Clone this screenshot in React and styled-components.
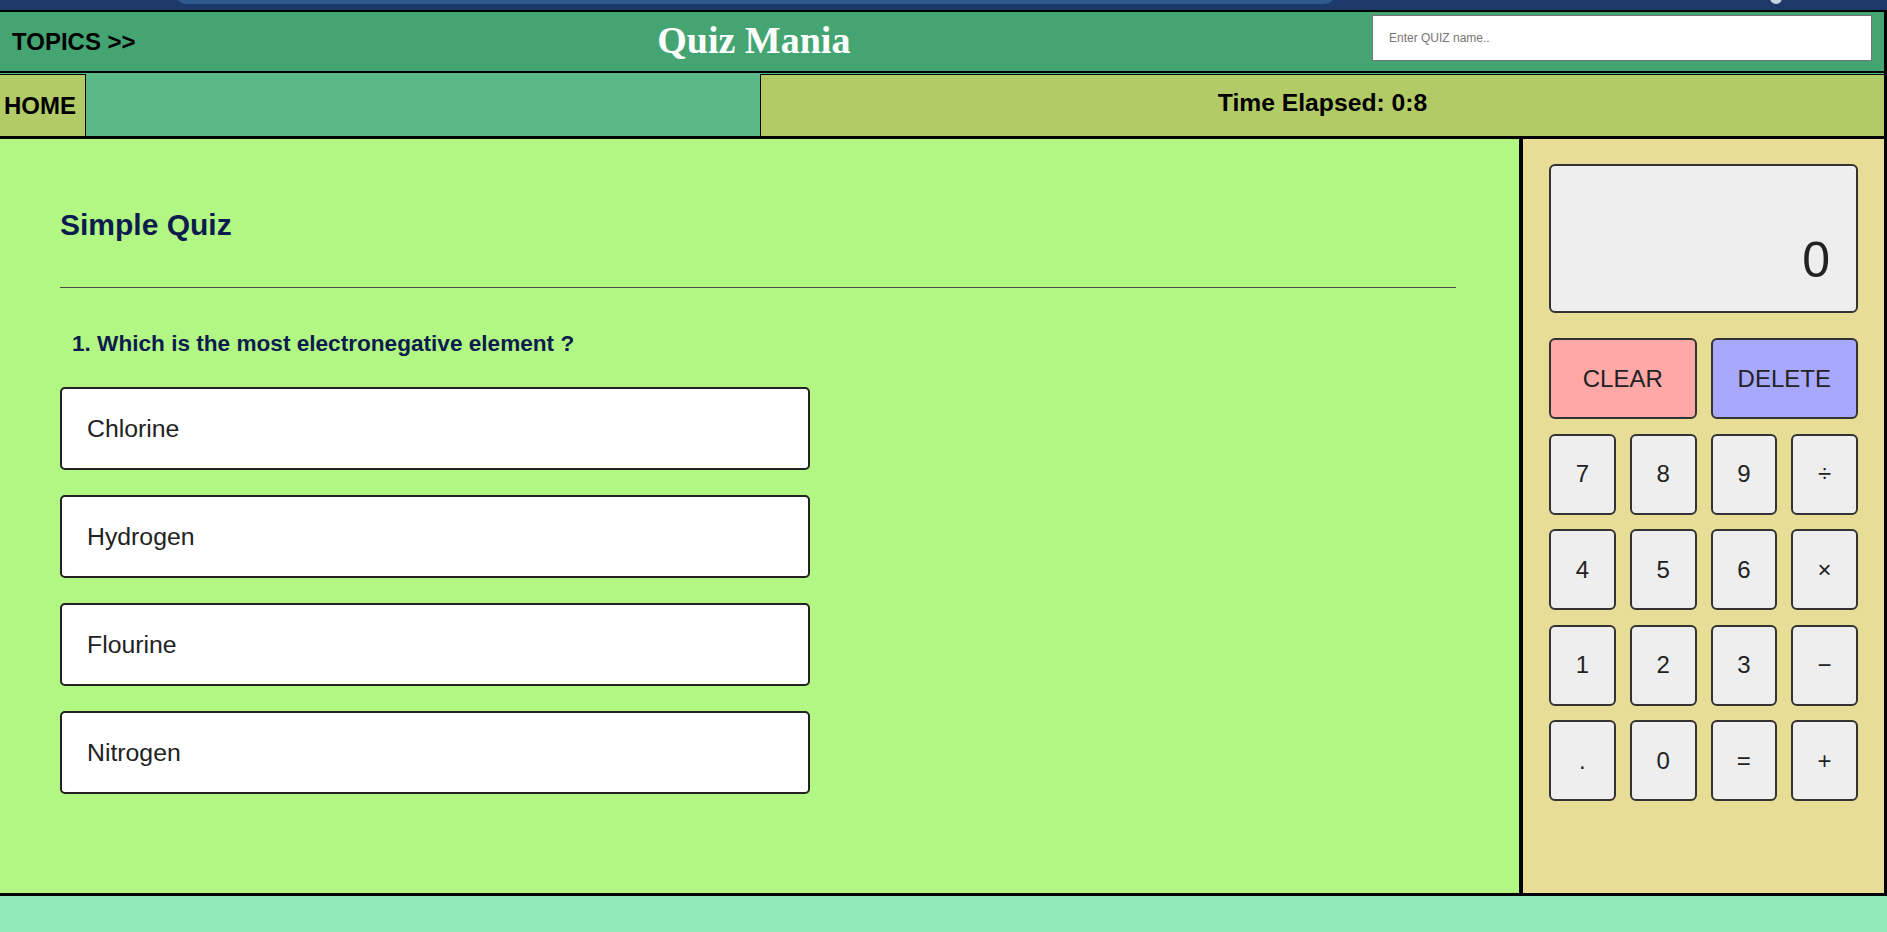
import React from "react";
import styled, { createGlobalStyle } from "styled-components";

const GlobalStyle = createGlobalStyle`
  html, body {
    margin: 0;
    padding: 0;
    background: #8fe9b9;
    font-family: "Liberation Sans", Arial, sans-serif;
  }
  * {
    box-sizing: border-box;
  }
`;

const BrowserStrip = styled.div`
  height: 10px;
  background-color: #1c3969;
  position: relative;
  overflow: hidden;
`;

const UrlBar = styled.div`
  position: absolute;
  left: 175px;
  top: -20px;
  width: 1161px;
  height: 24px;
  border-radius: 12px;
  background-color: #2f5a8f;
`;

const BrowserIcon = styled.div`
  position: absolute;
  left: 1770px;
  top: -8px;
  width: 12px;
  height: 12px;
  border-radius: 50%;
  background-color: #c9d3e0;
`;

const Frame = styled.div`
  border-top: 2px solid black;
  border-right: 3px solid black;
`;

const Header = styled.header`
  height: 59px;
  background-color: #45a572;
  display: flex;
  justify-content: space-between;
  align-items: center;
  padding: 0 12px;
`;

const Topics = styled.div`
  font-size: 24px;
  font-weight: bold;
  color: black;
  cursor: pointer;
`;

const Title = styled.h1`
  margin: 0 0 4px;
  font-family: "Liberation Serif", "Times New Roman", serif;
  font-size: 38px;
  font-weight: bold;
  color: white;
`;

const Search = styled.input`
  width: 500px;
  height: 46px;
  margin-bottom: 7px;
  border: 1px solid #767676;
  background: white;
  padding: 0 16px;
  font-family: "Liberation Sans", Arial, sans-serif;
  font-size: 12px;
  outline: none;

  &::placeholder {
    color: #757575;
  }
`;

const NavRow = styled.nav`
  height: 65px;
  border-top: 2px solid black;
  display: flex;
  background-color: #5bb987;
`;

const HomeButton = styled.div`
  width: 86px;
  padding-left: 4px;
  margin-top: 1px;
  border-top: 1px solid black;
  border-right: 1px solid black;
  background-color: #b2cb66;
  display: flex;
  align-items: center;
  font-size: 24px;
  font-weight: bold;
  color: black;
`;

const Filler = styled.div`
  flex: 1;
`;

const TimeBox = styled.div`
  width: 1124px;
  margin-top: 1px;
  border-top: 1px solid black;
  border-left: 1px solid black;
  background-color: #b2cb66;
  display: flex;
  justify-content: center;
  align-items: center;
  padding-bottom: 5px;
  font-size: 24.7px;
  font-weight: bold;
  color: black;
`;

const Main = styled.main`
  height: 760px;
  display: flex;
  border-top: 3px solid black;
  border-bottom: 3px solid black;
`;

const QuizPanel = styled.section`
  flex: 1;
  background-color: #b2f783;
  padding: 0 63px 0 60px;
`;

const QuizTitle = styled.h2`
  margin: 69px 0 0;
  line-height: 34px;
  font-size: 30px;
  font-weight: bold;
  color: #0c1c4e;
`;

const Rule = styled.hr`
  margin: 45px 0 0;
  border: 0;
  border-top: 1px solid #4a4a4a;
`;

const Question = styled.p`
  margin: 43px 0 0;
  padding-left: 12px;
  line-height: 26px;
  font-size: 22.6px;
  font-weight: bold;
  color: #0c1c4e;
`;

const Options = styled.div`
  margin-top: 30px;
  display: flex;
  flex-direction: column;
  gap: 25px;
`;

const Option = styled.button`
  width: 750px;
  height: 83px;
  background: white;
  border: 2px solid #222;
  border-radius: 5px;
  text-align: left;
  padding: 0 25px;
  font-family: "Liberation Sans", Arial, sans-serif;
  font-size: 24.8px;
  color: #222;
  cursor: pointer;
`;

const CalcPanel = styled.aside`
  width: 365px;
  border-left: 4px solid black;
  background-color: #e8dd97;
  padding: 25px 26px;
`;

const Display = styled.div`
  height: 149px;
  background-color: #eeeeee;
  border: 2px solid #333;
  border-radius: 6px;
  display: flex;
  justify-content: flex-end;
  align-items: flex-end;
  padding: 0 26px 22px;
  font-size: 50px;
  color: #222;
`;

const Keys = styled.div`
  margin-top: 25px;
  display: grid;
  grid-template-columns: repeat(4, 1fr);
  grid-auto-rows: 81px;
  column-gap: 14px;
  row-gap: 14.5px;
`;

const Key = styled.button`
  grid-column: span ${(props) => (props.wide ? 2 : 1)};
  background-color: ${(props) => props.bg || "#eeeeee"};
  border: 2px solid #333;
  border-radius: 6px;
  font-family: "Liberation Sans", Arial, sans-serif;
  font-size: 24px;
  color: #222;
  cursor: pointer;
  padding: 0;
`;

const Footer = styled.footer`
  height: 36px;
  background-color: #8fe9b9;
`;

const answers = ["Chlorine", "Hydrogen", "Flourine", "Nitrogen"];
const keys = ["7", "8", "9", "÷", "4", "5", "6", "×", "1", "2", "3", "−", ".", "0", "=", "+"];

const App = () => {
  return (
    <>
      <GlobalStyle />
      <BrowserStrip>
        <UrlBar />
        <BrowserIcon />
      </BrowserStrip>
      <Frame>
        <Header>
          <Topics>TOPICS &gt;&gt;</Topics>
          <Title>Quiz Mania</Title>
          <Search placeholder="Enter QUIZ name.." />
        </Header>
        <NavRow>
          <HomeButton>HOME</HomeButton>
          <Filler />
          <TimeBox>Time Elapsed: 0:8</TimeBox>
        </NavRow>
        <Main>
          <QuizPanel>
            <QuizTitle>Simple Quiz</QuizTitle>
            <Rule />
            <Question>1. Which is the most electronegative element ?</Question>
            <Options>
              {answers.map((a) => (
                <Option key={a}>{a}</Option>
              ))}
            </Options>
          </QuizPanel>
          <CalcPanel>
            <Display>0</Display>
            <Keys>
              <Key wide bg="#ffa8a8">CLEAR</Key>
              <Key wide bg="#a8a8ff">DELETE</Key>
              {keys.map((k) => (
                <Key key={k}>{k}</Key>
              ))}
            </Keys>
          </CalcPanel>
        </Main>
      </Frame>
      <Footer />
    </>
  );
};

export default App;
